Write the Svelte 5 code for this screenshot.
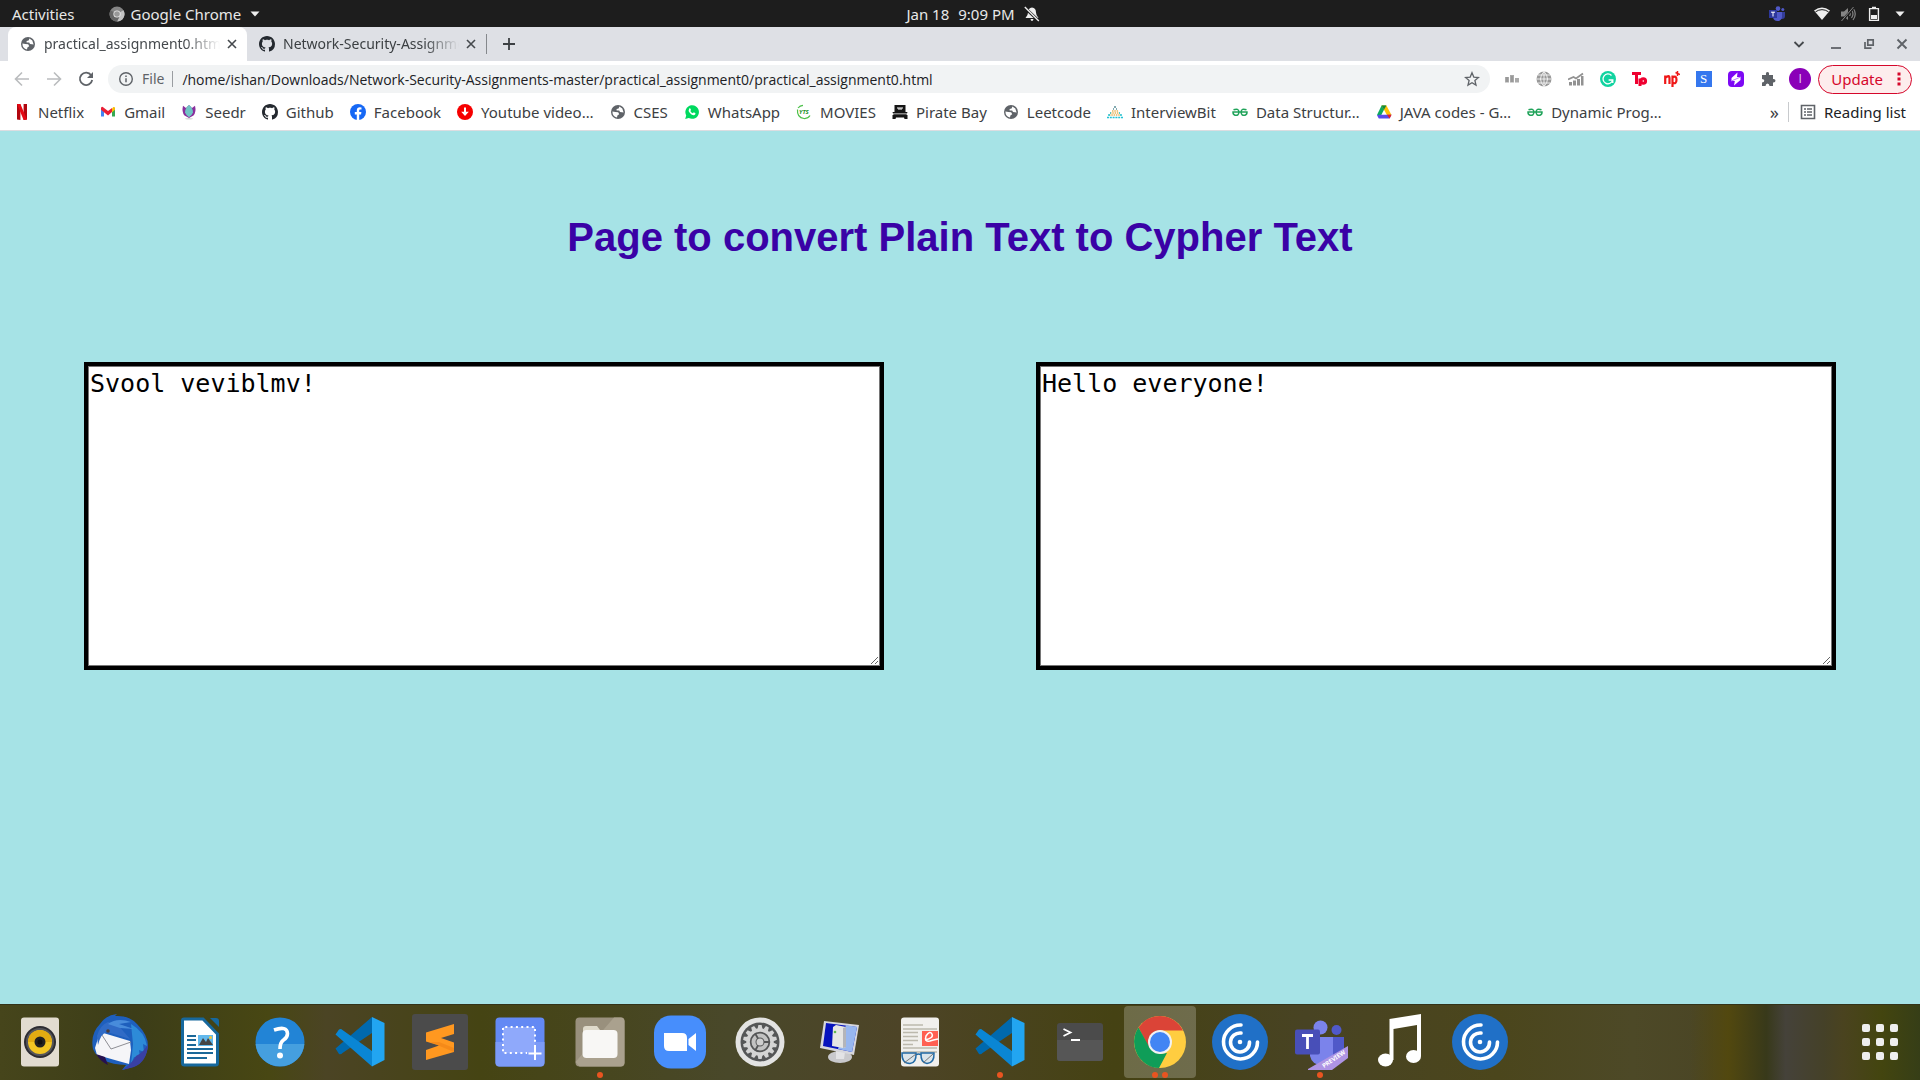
<script>
  const bookmarks = [
    ['netflix', 'Netflix'],
    ['gmail', 'Gmail'],
    ['seedr', 'Seedr'],
    ['github', 'Github'],
    ['facebook', 'Facebook'],
    ['download', 'Youtube video…'],
    ['globe', 'CSES'],
    ['whatsapp', 'WhatsApp'],
    ['yts', 'MOVIES'],
    ['pirate', 'Pirate Bay'],
    ['globe', 'Leetcode'],
    ['interviewbit', 'InterviewBit'],
    ['gfg', 'Data Structur…'],
    ['drive', 'JAVA codes - G…'],
    ['gfg', 'Dynamic Prog…'],
  ];
  const extensions = ['podium', 'web', 'trend', 'grammarly', 'tp', 'np', 'scholar', 'bolt', 'puzzle'];
  const dock = [
    ['rhythmbox', 0], ['thunderbird', 0], ['writer', 0], ['help', 0], ['vscode', 0],
    ['sublime', 0], ['screenshot', 0], ['files', 1], ['zoom', 0], ['settings', 0],
    ['computer', 0], ['viewer', 0], ['vscode', 1], ['terminal', 0], ['chrome', 2],
    ['citrix', 0], ['teams', 1], ['music', 0], ['citrix', 0],
  ];
  const teeth = Array.from({ length: 14 }, (_, i) => (i * 360) / 14);
  const grid = [0, 14, 28];
  let cypher = $state('Svool veviblmv!');
  let plain = $state('Hello everyone!');
  let url = $state('/home/ishan/Downloads/Network-Security-Assignments-master/practical_assignment0/practical_assignment0.html');
</script>

{#snippet small(name)}
  <svg class="i16" viewBox="0 0 16 16" aria-hidden="true">
    {#if name === 'globe'}
      <circle cx="8" cy="8" r="7" fill="#5f6368" />
      <path d="M9.400 2.500 12.300 4.600 13.600 8.500 12 8.300 10 8 9.200 6.400H6.600V5L8.600 4.400z" fill="#fff" />
      <path d="M2.400 7.600 5.400 8l2.800.2 1 2-1.800 1.200-.4 2.200Q2.400 12.400 2.400 7.600z" fill="#fff" />
    {:else if name === 'netflix'}
      <path d="M3 0h3.400v16L3 15.600zM9.600 0H13v15.600L9.600 16z" fill="#b1060f" />
      <path d="M3 0h3.400L13 15.600 9.600 16z" fill="#e50914" />
    {:else if name === 'gmail'}
      <path d="M1 3.200v9.300h3V7.400z" fill="#4285f4" />
      <path d="M15 3.200v9.300h-3V7.400z" fill="#34a853" />
      <path d="M12 4.600 13.400 3q1.600-.3 1.600 1.400v1.400l-3 2.400z" fill="#fbbc04" />
      <path d="M1 5.800V4.400Q1 2.400 2.800 3L8 7l4-3v4l-4 3.400L4 8.200z" fill="#ea1f35" />
    {:else if name === 'seedr'}
      <path d="M2 1.800Q.5 8 3.500 11.500L8 14l4.500-2.500q3-3.500 1.500-9.700L11 4 8 1 5 4z" fill="#8a2f9c" />
      <path d="M8 1Q4 4 4 8.500q1.200 3 4 4.700 2.800-1.700 4-4.700Q12 4 8 1z" fill="#70c4c4" />
      <ellipse cx="8" cy="14.800" rx="4" ry=".8" fill="#d7d7d7" />
    {:else if name === 'github'}
      <path fill="#24292f" d="M8 0C3.58 0 0 3.58 0 8c0 3.540 2.290 6.530 5.470 7.590.4.07.55-.17.55-.38 0-.19-.01-.82-.01-1.490-2.010.37-2.530-.49-2.690-.94-.09-.23-.48-.94-.82-1.130-.28-.15-.68-.52-.01-.53.63-.01 1.080.58 1.230.82.72 1.210 1.870.87 2.330.66.07-.52.28-.87.51-1.070-1.780-.2-3.640-.89-3.640-3.950 0-.87.31-1.590.82-2.150-.08-.2-.36-1.020.08-2.120 0 0 .67-.21 2.200.82.64-.18 1.320-.27 2-.27.68 0 1.360.09 2 .27 1.530-1.040 2.200-.82 2.200-.82.44 1.100.16 1.920.08 2.120.51.56.82 1.270.82 2.150 0 3.070-1.870 3.750-3.650 3.950.29.25.54.73.54 1.480 0 1.070-.01 1.930-.01 2.200 0 .21.15.46.55.38A8.013 8.013 0 0016 8c0-4.420-3.580-8-8-8z" />
    {:else if name === 'facebook'}
      <circle cx="8" cy="8" r="8" fill="#1668f5" />
      <path d="M6.800 16v-5.600h-2V8.100h2V6.400c0-2 1.200-3.100 3-3.100l1.700.15v2h-1c-1 0-1.300.6-1.300 1.200v1.450h2.200l-.35 2.300H9.200V16z" fill="#fff" />
    {:else if name === 'download'}
      <circle cx="8" cy="8" r="8" fill="#f60000" />
      <path d="M7 3.500h2v4.300h2.800L8 12 4.200 7.800H7z" fill="#fff" />
    {:else if name === 'whatsapp'}
      <path d="M1.200 15l1-3.600a6.800 6.800 0 1 1 2.600 2.600z" fill="#00d95f" />
      <path d="M5.200 4.500q.9-.8 1.300.2l.5 1.200-.7 1q.9 1.700 2.600 2.400l.9-1 1.700.9q.1 1.600-1.500 2Q8 11.400 5.900 9T5.200 4.500z" fill="#fff" />
    {:else if name === 'yts'}
      <path d="M1.500 5.500Q.8 13.500 8 14.500q4 .3 6-3M2 4Q4 1.500 7 1.300" fill="none" stroke="#4cc04a" stroke-width="1.200" />
      <text x="3" y="10" font-size="6" font-weight="700" font-style="italic" fill="#25932a">YTS</text>
    {:else if name === 'pirate'}
      <path d="M2.500 1h11v7H15.500l-1 3h1V15h-3l-.5-1.500H4L3.500 15H.5v-4h1l-1-3h2z" fill="#151515" />
      <path d="M5 3.500h6v1H9.500v1.500h-1V4.500h-1V6h-1V4.500H5zM1 9.500h14v.7H1z" fill="#fff" />
    {:else if name === 'interviewbit'}
      <path d="M7 3h2M6 5h1M9 5h1" stroke="#5a8f98" stroke-width="1.400" />
      <path d="M5 7h6.500M3 9h10" stroke="#e6b25a" stroke-width="1.500" stroke-dasharray="1.500 .8" />
      <path d="M2 11h12" stroke="#e6b25a" stroke-width="1.500" stroke-dasharray="1.500 .8" />
      <path d="M0 13.500h16M1 11h2M13 11h2M3 9h1M12 9h1" stroke="#22c3d6" stroke-width="1.600" stroke-dasharray="2 .8" />
    {:else if name === 'gfg'}
      <path d="M1.500 5.800Q6.600 3.800 7 8q-.4 4-4 3.200Q.8 10.400 1 8h14q.2 2.400-2 3.200-3.600.8-4-3.200.4-4.200 5.500-2.200" fill="none" stroke="#20a35a" stroke-width="1.500" />
    {:else if name === 'drive'}
      <path d="M5.600 1.500h4.600L4 13.500 1 11z" fill="#0da960" />
      <path d="M5.600 1.500h4.800L15.500 11h-4.600z" fill="#ffc107" />
      <path d="M5.600 1.500h4.800L8 5.800z" fill="#13883f" />
      <path d="M3.800 10.800h11.700L13.600 14.500H2.800L1 11.200z" fill="#574bea" />
      <path d="M11 10.800h4.500l-1.900 3.700z" fill="#ea1f20" />
    {:else if name === 'list'}
      <path d="M1.500 1.500h13v13h-13z" fill="none" stroke="#5f6368" stroke-width="1.600" />
      <path d="M4 5h2M7 5h5M4 8h2M7 8h5M4 11h2M7 11h5" stroke="#5f6368" stroke-width="1.500" />
    {:else if name === 'chromegrey'}
      <circle cx="8" cy="8" r="7.500" fill="#858585" />
      <path d="M8 8 14.500 4.200A7.500 7.500 0 0 1 8 15.500l3-6z" fill="#c3c3c3" />
      <path d="M8 8 1.500 4.200A7.500 7.500 0 0 0 8 15.500l3-6z" fill="#666" />
      <circle cx="8" cy="8" r="3.600" fill="#eee" /><circle cx="8" cy="8" r="2.800" fill="#999" />
    {:else if name === 'bell'}
      <path d="M8 1.500q4 .5 4 5 0 3 2.500 5.500h-13Q4 9.500 4 6.500q0-4.500 4-5zM6.500 13h3q-.3 2-1.500 2t-1.500-2z" fill="#eee" />
      <path d="m0 1 15 14" stroke="#1d1d1d" stroke-width="3" /><path d="m.8 1 14 14" stroke="#eee" stroke-width="1.400" />
    {:else if name === 'teamsmini'}
      <circle cx="9" cy="2.600" r="2.300" fill="#5059c9" /><circle cx="13.800" cy="3.600" r="1.500" fill="#5059c9" />
      <path d="M11 6h5v4q0 3-3 3h-2z" fill="#343d98" /><path d="M4 6h9v5q-.5 4-4.500 4T4 11z" fill="#5059c9" />
      <path d="M0 4h8v8H0z" fill="#2e389c" /><path d="M2 6.200h4M4 6v4.500" stroke="#fff" />
    {:else if name === 'wifi'}
      <path d="M0 4.500Q8-1.500 16 4.500L8 14z" fill="#eee" /><path d="M1.500 5.800Q8 1.500 14.500 5.800" fill="none" stroke="#1d1d1d" />
    {:else if name === 'mute'}
      <path d="M1 5.500h3L8 2v12l-4-3.500H1z" fill="#858585" />
      <path d="M9.500 6q1.500 2 0 4M11.500 4q3 4 0 8M13 2q4.500 6 0 12" fill="none" stroke="#858585" stroke-width="1.200" />
      <path d="M14 1 2 15" stroke="#1d1d1d" stroke-width="2.400" /><path d="M13.500 1 1.500 15" stroke="#858585" />
    {:else if name === 'battery'}
      <path d="M3.600 2.600h8.800v11.800H3.600z" fill="none" stroke="#eee" stroke-width="1.400" /><path d="M6 .7h4v2H6zM5 9h6v4H5z" fill="#eee" />
    {:else if name === 'caret'}
      <path d="M3.500 5.500h9L8 10.500z" fill="#eee" />
    {:else if name === 'close'}
      <path d="m4 4 8 8M12 4l-8 8" stroke="#45494d" stroke-width="1.600" />
    {:else if name === 'plus'}
      <path d="M8 2v12M2 8h12" stroke="#3c4043" stroke-width="1.800" />
    {:else if name === 'chevron'}
      <path d="m3.500 6 4.500 4.500L12.500 6" fill="none" stroke="#45494d" stroke-width="1.800" />
    {:else if name === 'minimize'}
      <path d="M3 12h10" stroke="#5f6368" stroke-width="1.800" />
    {:else if name === 'restore'}
      <path d="M6.800 3.800h5.400v5.400H6.800z" fill="none" stroke="#5f6368" stroke-width="1.700" /><path d="M4 6v6.200h6.500" fill="none" stroke="#5f6368" stroke-width="1.700" />
    {:else if name === 'closewin'}
      <path d="m3.500 3.500 9 9M12.500 3.500l-9 9" stroke="#5f6368" stroke-width="1.900" />
    {:else if name === 'back'}
      <path d="M15 8H2M8 1.500 1.500 8 8 14.500" fill="none" stroke="#babcbe" stroke-width="1.600" />
    {:else if name === 'forward'}
      <path d="M1 8h13M8 1.500 14.500 8 8 14.500" fill="none" stroke="#babcbe" stroke-width="1.600" />
    {:else if name === 'reload'}
      <path d="M13.200 4.300A6.200 6.200 0 1 0 14.200 9" fill="none" stroke="#5f6368" stroke-width="1.800" /><path d="M15 1v6H9z" fill="#5f6368" />
    {:else if name === 'info'}
      <circle cx="8" cy="8" r="6.300" fill="none" stroke="#5f6368" stroke-width="1.400" /><path d="M8 7.200v4M8 4.400V6" stroke="#5f6368" stroke-width="1.500" />
    {:else if name === 'star'}
      <path d="m8 1.800 1.800 4.300 4.700.4-3.600 3 1.100 4.600L8 11.700l-4 2.400 1.100-4.600-3.600-3 4.700-.4z" fill="none" stroke="#5f6368" stroke-width="1.300" />
    {:else if name === 'podium'}
      <path d="M1 6h4v5.500H1zM6 4h4v7.500H6zM11 7h4v4.500h-4z" fill="#aaa" /><path d="M3 6v5M8 5v6" stroke="#888" />
    {:else if name === 'web'}
      <circle cx="8" cy="8" r="7.500" fill="#999" />
      <path d="M8 .5v15M.5 8h15M2 4h12M2 12h12M8 .5q-7 7.500 0 15 7-7.500 0-15" fill="none" stroke="#fff" stroke-width=".8" />
    {:else if name === 'trend'}
      <path d="M1 11h3v3.500H1zM5 9.500h3v5H5zM9 8h3v6.500H9zM13 5h2.500v9.500H13z" fill="#929292" /><path d="M0 8.500 5.500 6l2.500 1.500 7-5" fill="none" stroke="#929292" stroke-width="1.800" />
    {:else if name === 'grammarly'}
      <circle cx="8" cy="8" r="8" fill="#11d3a0" /><path d="M11.500 4.500A4.900 4.900 0 1 0 12.700 9H8.600M12.800 8.500v3.500" fill="none" stroke="#fff" stroke-width="1.300" />
    {:else if name === 'tp'}
      <path d="M0 1h9v3H6v9H3V4H0z" fill="#ef0030" /><path d="M8 15V7.500M9 10a2.300 2.300 0 1 1 4.600 0A2.300 2.300 0 0 1 9 10" fill="none" stroke="#ef0030" stroke-width="3" />
    {:else if name === 'np'}
      <path d="M1.200 13V4.500M1.200 7Q5.500 3 5.500 7.500V13M8.500 16V4.500M8.500 6.500q4-2.500 4 2.300t-4 2.900" fill="none" stroke="#ef1818" stroke-width="2.200" /><path d="M13.500 0v5M11.500 1.500l4.500 2" stroke="#ef1818" stroke-width="1.500" />
    {:else if name === 'scholar'}
      <path d="M0 0h16v16H0z" fill="#3577ee" /><text x="4" y="12" font-size="13" font-family="Liberation Serif" fill="#fff">S</text>
    {:else if name === 'bolt'}
      <rect width="16" height="16" rx="4" fill="#7d09f4" /><path d="M9.500 1.500 3.500 7v3h3.300L6 14.500 12.500 9V6H9z" fill="#fff" /><path d="m3.500 10 9-4" stroke="#bd7fff" stroke-width="1" />
    {:else if name === 'puzzle'}
      <path d="M2 4h4Q5.500 1 7.500 1T9 4h4v4q2.500-.3 2.500 1.700T13 11.500V15H9.500q-.2-2.500-2-2.500t-2 2.500H2v-3.500q2.300-.2 2.300-1.700T2 8z" fill="#5f6368" />
    {/if}
  </svg>
{/snippet}

{#snippet app(name)}
  <svg class="i56" viewBox="0 0 56 56" aria-hidden="true">
    {#if name === 'rhythmbox'}
      <rect x="9" y="3.500" width="38" height="49" rx="3" fill="#e2dcd0" />
      <circle cx="28" cy="28" r="16" fill="#2d2d32" /><circle cx="28" cy="28" r="14" fill="#55555a" /><circle cx="28" cy="28" r="12" fill="#f2c522" />
      <path d="M16 28a12 12 0 0 1 24 0z" fill="#e3ac12" /><circle cx="28" cy="28" r="5.500" fill="#222" /><circle cx="28" cy="28" r="2.500" fill="#111" />
    {:else if name === 'thunderbird'}
      <path d="M8 10Q14 1 25 0l-2 2q14-1 22 8 11 11 11 22-2 16-15 21l-11 3 4-5Q7 50 1 35-2 20 8 10z" fill="#1e5fbd" />
      <path d="M39 10q14 8 16 22l-4-2 1 8-5-2 1 8-6-1-3 7 2-20z" fill="#2d8bd8" />
      <path d="M44 42q8-4 12-12-1 18-14 23l-12 3q9-5 14-14z" fill="#3940a5" />
      <path d="M8 18 38 27l1 9-2 14L5 41l-2-7z" fill="#f5f5f8" />
      <path d="m8 18 11 17 20-7" fill="none" stroke="#8e8e94" />
      <path d="M5 22Q8 11 16 8l10 3 12 14-23-7q-6 1-9 13z" fill="#306bc6" />
      <path d="M4 40q5 8 12 11l-3-8z" fill="#26104f" /><circle cx="16" cy="17" r="1.800" fill="#4b3c39" />
      <path d="M16 10Q25 3 39 8l-12 2 15 5-14-1z" fill="#488cdb" />
    {:else if name === 'writer'}
      <path d="M12 5h19L45.500 20v29q0 2-2 2h-31q-2 0-2-2V6.500Q10.500 5 12 5z" fill="#fff" stroke="#17689d" stroke-width="3" />
      <path d="M38 4h6q3 0 3 3v6z" fill="#17689d" />
      <path d="M15 22h9M15 26h9M15 31h9M15 35h26M15 39h26M15 44h20" stroke="#1b6899" stroke-width="2" />
      <path d="M26 21h15v11H26z" fill="#62b8ec" /><path d="m27 31 4-7 3 4 2-4 5 7z" fill="#444" /><circle cx="38.500" cy="23.500" r="1.500" fill="#f4c839" />
    {:else if name === 'help'}
      <circle cx="28" cy="28" r="24.500" fill="#2284d6" /><path d="M3.600 30h48.800a24.500 24.500 0 0 1-48.800 0z" fill="#459fdf" />
      <path d="M22 16q13-4.500 13.500 3.500 0 4-4 6.500-3.500 2.500-3.500 9" fill="none" stroke="#fff" stroke-width="3.600" /><circle cx="28" cy="41.500" r="3" fill="#fff" />
    {:else if name === 'vscode'}
      <path d="M3.500 34.500 7 40q2 .7 3.500-1L40 19V3z" fill="#0069ae" />
      <path d="M3.500 20.500 7 15.500q2-1 3.500.5L40 37v15.500z" fill="#0a86d4" />
      <path d="m40 3 12.500 6v37L40 52.500z" fill="#22a5f1" />
    {:else if name === 'sublime'}
      <rect width="56" height="56" rx="3" fill="#4b4b4b" />
      <path d="M14 18.500 42 10v10L29 24l13 4.500V38L14 46V36l13-4.500-13-4z" fill="#ff9820" /><path d="m18 28 24 10v-4l-15-6z" fill="#e87a12" opacity=".45" />
    {:else if name === 'screenshot'}
      <rect x="3.500" y="3.500" width="49" height="49" rx="4" fill="#6389f4" /><path d="M3.500 28h49v20q0 4.500-4 4.500h-41q-4 0-4-4z" fill="#7c9bf7" />
      <path d="M11 13h32v26H11z" fill="#8fa9fb" /><path d="M43 33V13H11v26h24" fill="none" stroke="#fff" stroke-width="2" stroke-dasharray="2 3.300" /><path d="M43 33v13M36.500 39.500h13" stroke="#fff" stroke-width="2" />
    {:else if name === 'files'}
      <rect x="3.500" y="3.500" width="49" height="49" rx="4" fill="#99907d" /><path d="M3.500 48 42 3.500h7q3.500 0 3.500 4v41q0 4-4 4h-41z" fill="#aaa18e" />
      <path d="M11 15q0-3 3-3h11l3 4 6 8H11z" fill="#dfdacb" /><rect x="10.500" y="16" width="35" height="28" rx="4" fill="#f8f7f5" />
    {:else if name === 'zoom'}
      <rect x="2" y="1.500" width="52" height="53" rx="17" fill="#478efc" />
      <path d="M12 19h18q5 0 5 5v13H17q-5 0-5-5zM36.500 25 44 19v18l-7.500-6z" fill="#fff" />
    {:else if name === 'settings'}
      <circle cx="28" cy="28" r="24.500" fill="#e3e3e2" /><circle cx="28" cy="28" r="19.500" fill="#555657" />
      {#each teeth as a}<path d="m25.500 15 .9-4h3.200l.9 4z" fill="#d4d4d4" transform="rotate({a} 28 28)" />{/each}
      <circle cx="28" cy="28" r="12" fill="none" stroke="#d4d4d4" stroke-width="3.500" /><circle cx="28" cy="28" r="6.500" fill="none" stroke="#c2c2c2" stroke-width="4" />
      <path d="M28 28h10M28 28l-5-8.700M28 28l-5 8.700" stroke="#555657" stroke-width="1.800" /><circle cx="28" cy="28" r="3.500" fill="#cfcfcf" />
    {:else if name === 'computer'}
      <ellipse cx="28" cy="43" rx="12" ry="6" fill="#c9c9cc" /><path d="m24 37 9 1-1 7h-8z" fill="#e3e3e5" />
      <path d="m12 7 35 4-5 30L8 34z" fill="#d7d7dc" /><path d="m14 9 31 4-5 25-29-6z" fill="#0713bd" /><path d="m34 11 11 2-5 25-14-3z" fill="#98b7ef" />
      <path d="m21 13 3-2 10 2v20l-3 1-11-2z" fill="#e6e6e4" /><path d="M31 14v20l3-1V13z" fill="#b4b5ba" /><circle cx="23" cy="18" r="1.300" fill="#62b74f" />
    {:else if name === 'viewer'}
      <rect x="9" y="3.500" width="38" height="49" rx="3" fill="#f1f0ed" />
      <path d="M11 11h20M11 15h34M11 18.500h15M11 22.500h15M11 26.500h15M11 30.500h10M11 34h34M11 38h34" stroke="#bcb9ad" stroke-width="1.500" />
      <path d="M30 17h16v15H30z" fill="#ff6052" /><path d="M33 26q9-2 7-6t-6 2q-2 6 4 5 3-1 8-2" fill="none" stroke="#fff" stroke-width="1.500" />
      <path d="M10 39h14q.5 10-6 10.500-8.500 0-8-10.500zM29 39h13q.5 10-7 10.500-6.500-.5-6-10.500zM24 41q2.500-2 5 0" fill="#dbe5eb" stroke="#226aa5" stroke-width="1.500" />
      <path d="m12 49 12-9M31 49l10-9" stroke="#777" />
    {:else if name === 'terminal'}
      <rect x="5" y="9" width="46" height="38" rx="3" fill="#4b4b4b" /><path d="M5 26h46v18q0 3-3 3H8q-3 0-3-3z" fill="#565656" />
      <path d="m11.500 15 7 3.500-7 3.500M19 26h9" fill="none" stroke="#fff" stroke-width="1.800" />
    {:else if name === 'chrome'}
      <circle cx="28" cy="28" r="26" fill="#ffcd40" /><path d="M28 2a26 26 0 0 1 23 14.500H28L17 34 6.500 13.500A26 26 0 0 1 28 2z" fill="#db4437" />
      <path d="M6.500 13.500 17.500 33.500 28 40l7-1-8 15A26 26 0 0 1 6.500 13.500z" fill="#0f9d58" />
      <circle cx="28" cy="28" r="12" fill="#f2f2f2" /><circle cx="28" cy="28" r="10" fill="#4285f4" />
    {:else if name === 'citrix'}
      <circle cx="28" cy="28" r="28" fill="#2070c7" />
      <path d="M29 11a17 17 0 1 0 16.500 17M29 19a9.500 9.500 0 1 0 8.500 9" fill="none" stroke="#fff" stroke-width="3.600" stroke-linecap="round" /><circle cx="28" cy="28" r="2.300" fill="#fff" />
    {:else if name === 'teams'}
      <circle cx="28.500" cy="13.500" r="7" fill="#7b83eb" /><circle cx="44.500" cy="16" r="5" fill="#5059c9" />
      <path d="M39 23h13v17q-2 8-13 8z" fill="#5059c9" /><path d="M18 23h24v19q-2 9-12 9T18 42z" fill="#7b83eb" /><path d="M41 23h1v20h-1z" fill="#5059c9" />
      <rect x="3" y="15.500" width="25" height="25" rx="2" fill="#484fb8" /><path d="M10 21.500h11M15.500 21.500V35" stroke="#fff" stroke-width="2.800" />
      <path d="M56 32v12L40 56H16v-1z" fill="#ae94e4" /><text x="32" y="54" font-size="6" font-weight="700" fill="#fff" transform="rotate(-34 32 54)">PREVIEW</text>
    {:else if name === 'music'}
      <path d="M17.500 5 49 0v42h-4V11L21.500 15v31h-4z" fill="#fff" /><ellipse cx="13.500" cy="46" rx="7.500" ry="6.500" fill="#fff" /><ellipse cx="41.500" cy="42.500" rx="7.500" ry="6.500" fill="#fff" />
    {/if}
  </svg>
{/snippet}

<div class="desktop">
  <header class="topbar">
    <div class="side">
      <button class="plainbtn">Activities</button>
      <button class="plainbtn appmenu">{@render small('chromegrey')}<span>Google Chrome</span>{@render small('caret')}</button>
    </div>
    <button class="plainbtn clock"><span>Jan 18</span><span>9:09 PM</span>{@render small('bell')}</button>
    <div class="side tray">
      <span class="teamstray">{@render small('teamsmini')}</span>
      {@render small('wifi')}{@render small('mute')}{@render small('battery')}{@render small('caret')}
    </div>
  </header>

  <div class="tabs">
    <div class="tab active">
      {@render small('globe')}<span class="tabtitle">practical_assignment0.html</span>
      <button class="plainbtn" aria-label="Close tab">{@render small('close')}</button>
    </div>
    <div class="tab">
      {@render small('github')}<span class="tabtitle">Network-Security-Assignments</span>
      <button class="plainbtn" aria-label="Close tab">{@render small('close')}</button>
    </div>
    <span class="tabline"></span>
    <button class="plainbtn newtab" aria-label="New tab">{@render small('plus')}</button>
    <div class="windowbtns">
      <button class="plainbtn search" aria-label="Search tabs">{@render small('chevron')}</button>
      <button class="plainbtn" aria-label="Minimize">{@render small('minimize')}</button>
      <button class="plainbtn" aria-label="Restore">{@render small('restore')}</button>
      <button class="plainbtn" aria-label="Close">{@render small('closewin')}</button>
    </div>
  </div>

  <div class="toolbar">
    <button class="tool" aria-label="Back">{@render small('back')}</button>
    <button class="tool" aria-label="Forward">{@render small('forward')}</button>
    <button class="tool" aria-label="Reload">{@render small('reload')}</button>
    <div class="omnibox">
      {@render small('info')}<span class="scheme">File</span>
      <input class="url" aria-label="Address" bind:value={url} />
      <button class="plainbtn" aria-label="Bookmark this page">{@render small('star')}</button>
    </div>
    {#each extensions as ext}
      <button class="tool" aria-label={ext}>{@render small(ext)}</button>
    {/each}
    <button class="tool" aria-label="Profile"><span class="avatar">I</span></button>
    <button class="update">Update<svg class="dots" viewBox="0 0 4 16" aria-hidden="true"><path d="M.5 1.500h3v3h-3zM.5 6.500h3v3h-3zM.5 11.500h3v3h-3z" fill="#d5072b" /></svg></button>
  </div>

  <nav class="bookmarks">
    <div class="links">
      {#each bookmarks as [icon, label]}
        <a href="#{label}">{@render small(icon)}<span>{label}</span></a>
      {/each}
    </div>
    <button class="plainbtn more" aria-label="More bookmarks">»</button>
    <button class="plainbtn reading">{@render small('list')}<span>Reading list</span></button>
  </nav>

  <main>
    <h1>Page to convert Plain Text to Cypher Text</h1>
    <div class="boxes">
      <div class="box"><textarea aria-label="Plain text" spellcheck="false" bind:value={cypher}></textarea></div>
      <div class="box"><textarea aria-label="Cypher text" spellcheck="false" bind:value={plain}></textarea></div>
    </div>
  </main>

  <footer class="dock">
    {#each dock as [name, running]}
      <button class="launcher" class:focused={name === 'chrome'} aria-label={name}>
        {@render app(name)}
        {#if running}
          <span class="running">{#each Array(running) as _}<i></i>{/each}</span>
        {/if}
      </button>
    {/each}
    <button class="launcher apps" aria-label="Show applications">
      <svg class="i56" viewBox="0 0 56 56" aria-hidden="true">
        {#each grid as gx}{#each grid as gy}<rect x={10 + gx} y={10 + gy} width="8" height="8" rx="2" fill="#eee" />{/each}{/each}
      </svg>
    </button>
  </footer>
</div>

<style>
  :global(body) { margin: 0; }
  .desktop {
    display: flex;
    flex-direction: column;
    min-height: 100vh;
    font-family: "Noto Sans", "Open Sans", sans-serif;
    font-size: 15px;
    line-height: 20px;
    color: #3c4043;
    background: #a6e3e6;
  }
  .i16 { width: 16px; height: 16px; flex: none; display: block; }
  .i56 { width: 56px; height: 56px; display: block; }
  button { font: inherit; color: inherit; border: 0; background: none; padding: 0; margin: 0; }
  .plainbtn { display: flex; align-items: center; }

  .topbar {
    display: grid;
    grid-template-columns: 1fr auto 1fr;
    align-items: center;
    height: 27px;
    padding: 0 12px;
    background: #1d1d1d;
    color: #e8e8e8;
  }
  .side { display: flex; align-items: center; gap: 34px; }
  .appmenu { gap: 6px; }
  .clock { gap: 9px; padding-left: 26px; }
  .tray { justify-content: flex-end; gap: 10px; }
  .teamstray { margin-right: 19px; }

  .tabs { display: flex; align-items: center; height: 34px; background: #dee0e5; padding: 0 10px 0 8px; font-size: 14px; }
  .tab { box-sizing: border-box; display: flex; align-items: center; width: 239px; height: 34px; padding: 0 7px 0 12px; }
  .active { background: #fff; border-radius: 8px 8px 0 0; color: #45494d; }
  .tabtitle {
    flex: 1;
    min-width: 0;
    margin: 0 4px 0 8px;
    overflow: hidden;
    white-space: nowrap;
    mask-image: linear-gradient(to right, #000 80%, transparent);
  }
  .tabline { width: 1px; height: 20px; background: #85888c; }
  .newtab { margin-left: 14px; }
  .windowbtns { display: flex; gap: 17px; margin-left: auto; }
  .search { margin-right: 4px; }

  .toolbar { display: flex; align-items: center; height: 36px; padding: 0 8px 0 6px; background: #fff; }
  .tool { display: flex; align-items: center; justify-content: center; width: 32px; height: 32px; flex: none; }
  .omnibox {
    display: flex;
    align-items: center;
    flex: 1;
    height: 28px;
    margin: 0 6px;
    padding: 0 10px;
    border-radius: 14px;
    background: #f1f3f4;
    font-size: 14px;
  }
  .scheme { padding: 0 8px; border-right: 1px solid #9a9da1; line-height: 16px; color: #5f6368; }
  .url { flex: 1; min-width: 0; border: 0; padding: 0 0 0 9px; background: none; font: 14px "Open Sans", sans-serif; color: #202124; outline: none; }
  .avatar { width: 22px; height: 22px; border-radius: 50%; background: #8a00b8; color: #e6d5f0; font: 12px/22px "Open Sans", sans-serif; text-align: center; }
  .update {
    display: flex;
    align-items: center;
    gap: 14px;
    height: 29px;
    margin-left: 2px;
    padding: 0 10px 0 12px;
    border: 1px solid #d5072b;
    border-radius: 15px;
    background: #fdeded;
    color: #d5072b;
  }
  .dots { width: 4px; height: 16px; }

  .bookmarks { display: flex; align-items: center; height: 29px; padding: 0 14px 4px; background: #fff; border-bottom: 1px solid #dcdde1; }
  .links { display: flex; gap: 16px; }
  .links a { display: flex; align-items: center; gap: 8px; color: inherit; text-decoration: none; white-space: nowrap; }
  .more { margin-left: auto; font-size: 18px; }
  .reading { gap: 8px; margin-left: 9px; padding-left: 11px; border-left: 1px solid #c8cacd; color: #202124; }

  main { flex: 1; padding: 83px 84px 0; }
  h1 { margin: 0 0 102px; font: bold 40px/46px "Liberation Sans", Arial, sans-serif; color: #3a02a6; text-align: center; }
  .boxes { display: flex; gap: 152px; }
  .box { flex: 1; display: flex; border: 4px solid #000; }
  textarea {
    box-sizing: border-box;
    width: 100%;
    height: 300px;
    margin: 0;
    padding: 2px 1px;
    border: 1px solid #767676;
    border-radius: 0;
    background: #fff;
    color: #000;
    font: 25px "DejaVu Sans Mono", monospace;
    outline: none;
  }

  .dock {
    display: flex;
    height: 76px;
    background:
      linear-gradient(90deg, transparent 88%, #52480f 90%, #38391a 92%, #45423a 93%, #454128 95%, #4a431f 96%, #43450f 98%, #363e17),
      linear-gradient(90deg, #46451b, #3c3d18 7%, #484713 14%, #4b4424 17%, #454413 25%, #49482a 38%, #4d4427 47%, #454213 58%, #484323 68%, #4b461c 78%, #4d4927 85%, #443c20);
    box-shadow: inset 0 1px #33331a;
  }
  .launcher { position: relative; display: flex; align-items: center; justify-content: center; width: 80px; height: 76px; flex: none; }
  .focused { width: 72px; height: 72px; margin: 2px 4px; border-radius: 4px; background: #ffffff38; }
  .running { position: absolute; left: 0; right: 0; bottom: 2px; display: flex; justify-content: center; gap: 4px; }
  .focused .running { bottom: 0; }
  .running i { width: 6px; height: 6px; border-radius: 50%; background: #e95420; }
  .apps { margin-left: auto; }
</style>
